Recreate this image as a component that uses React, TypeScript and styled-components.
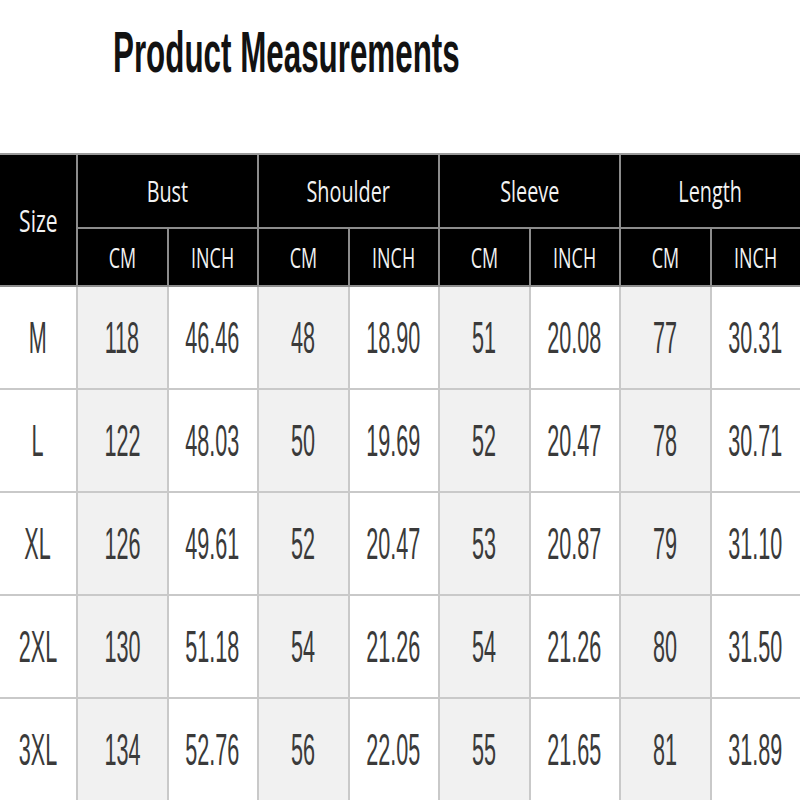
import React from "react";
import styled, { createGlobalStyle } from "styled-components";

const Global = createGlobalStyle`
  html, body { margin: 0; padding: 0; background: #ffffff; overflow: hidden; }
  body { width: 800px; height: 800px; }
  #root { width: 800px; }
`;

const Page = styled.div`
  width: 800px;
  height: 800px;
  overflow: hidden;
  display: flex;
  flex-direction: column;
  background: #fff;
`;

const TitleBar = styled.div`
  flex-shrink: 0;
  height: 153px;
  box-sizing: border-box;
  padding: 24px 0 0 113px;
`;

const Title = styled.h1`
  margin: 0;
  display: inline-block;
  font-family: "Liberation Sans", Arial, sans-serif;
  font-weight: 700;
  font-size: 57px;
  line-height: 57px;
  color: #121212;
  white-space: nowrap;
  transform: scaleX(0.55);
  transform-origin: left center;
`;

const Table = styled.div`
  flex-shrink: 0;
  display: grid;
  grid-template-columns: 76px repeat(8, 1fr);
  grid-template-rows: 74px 58px repeat(5, 103px);
  border-top: 2px solid #9a9a9a;
`;

const HeadCell = styled.div<{ $span?: number; $rows?: number; $first?: boolean }>`
  grid-column: span ${(p) => p.$span ?? 1};
  grid-row: span ${(p) => p.$rows ?? 1};
  background: #000;
  box-sizing: border-box;
  border-left: ${(p) => (p.$first ? "none" : "2px solid #8c8c8c")};
  border-bottom: 2px solid #8c8c8c;
  display: flex;
  align-items: center;
  justify-content: center;
  overflow: hidden;
`;

const BodyCell = styled.div<{ $shade?: boolean; $first?: boolean }>`
  background: ${(p) => (p.$shade ? "#f1f1f1" : "#ffffff")};
  box-sizing: border-box;
  border-left: ${(p) => (p.$first ? "none" : "2px solid #c9c9c9")};
  border-bottom: 2px solid #c9c9c9;
  display: flex;
  align-items: center;
  justify-content: center;
  overflow: hidden;
`;

const HeadText = styled.span<{ $size: number; $sx: number }>`
  display: inline-block;
  font-family: "Open Sans", "Noto Sans", sans-serif;
  font-size: ${(p) => p.$size}px;
  line-height: 1;
  color: #f2f2f2;
  white-space: nowrap;
  transform: scaleX(${(p) => p.$sx});
`;

const ValueText = styled.span`
  display: inline-block;
  font-family: "Liberation Sans", Arial, sans-serif;
  font-size: 45px;
  line-height: 1;
  color: #3a3a3a;
  white-space: nowrap;
  transform: scaleX(0.48);
`;

const groups = ["Bust", "Shoulder", "Sleeve", "Length"];

const rows: [string, string[]][] = [
  ["M", ["118", "46.46", "48", "18.90", "51", "20.08", "77", "30.31"]],
  ["L", ["122", "48.03", "50", "19.69", "52", "20.47", "78", "30.71"]],
  ["XL", ["126", "49.61", "52", "20.47", "53", "20.87", "79", "31.10"]],
  ["2XL", ["130", "51.18", "54", "21.26", "54", "21.26", "80", "31.50"]],
  ["3XL", ["134", "52.76", "56", "22.05", "55", "21.65", "81", "31.89"]],
];

export default function App() {
  return (
    <Page>
      <Global />
      <TitleBar>
        <Title>Product Measurements</Title>
      </TitleBar>
      <Table>
        <HeadCell $rows={2} $first>
          <HeadText $size={31} $sx={0.68}>Size</HeadText>
        </HeadCell>
        {groups.map((g) => (
          <HeadCell key={g} $span={2}>
            <HeadText $size={30} $sx={0.66}>{g}</HeadText>
          </HeadCell>
        ))}
        {groups.map((g) => (
          <React.Fragment key={g + "-units"}>
            <HeadCell>
              <HeadText $size={28} $sx={0.64}>CM</HeadText>
            </HeadCell>
            <HeadCell>
              <HeadText $size={28} $sx={0.64}>INCH</HeadText>
            </HeadCell>
          </React.Fragment>
        ))}
        {rows.map(([size, vals]) => (
          <React.Fragment key={size}>
            <BodyCell $first>
              <ValueText>{size}</ValueText>
            </BodyCell>
            {vals.map((v, i) => (
              <BodyCell key={i} $shade={i % 2 === 0}>
                <ValueText>{v}</ValueText>
              </BodyCell>
            ))}
          </React.Fragment>
        ))}
      </Table>
    </Page>
  );
}
